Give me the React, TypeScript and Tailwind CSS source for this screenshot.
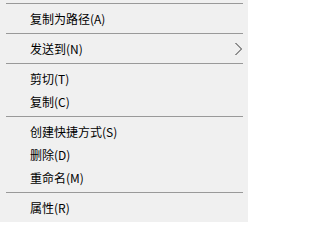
import React from 'react';

type Entry = { label: string; submenu?: boolean } | 'sep';

const entries: Entry[] = [
  'sep',
  { label: '复制为路径(A)' },
  'sep',
  { label: '发送到(N)', submenu: true },
  'sep',
  { label: '剪切(T)' },
  { label: '复制(C)' },
  'sep',
  { label: '创建快捷方式(S)' },
  { label: '删除(D)' },
  { label: '重命名(M)' },
  'sep',
  { label: '属性(R)' },
];

function ChevronRight() {
  return (
    <svg width="9" height="14" viewBox="0 0 9 14" className="text-[#333]">
      <path d="M1.5 1 L7.5 7 L1.5 13" fill="none" stroke="currentColor" strokeWidth="1" />
    </svg>
  );
}

export default function App() {
  return (
    <div
      className="w-[248px] h-[222px] bg-[#f0f0f0] pb-[3px] overflow-hidden select-none"
      style={{ fontFamily: '"Noto Sans CJK SC", "Noto Sans", sans-serif' }}
    >
      {entries.map((e, i) =>
        e === 'sep' ? (
          <div key={i} className="h-[7px] py-[3px] pl-[6px] pr-[5px]">
            <div className="h-px bg-[#999999]" />
          </div>
        ) : (
          <div
            key={i}
            className="h-[23px] flex items-center justify-between pl-[30px] pr-[5px] text-[12px] leading-none text-black"
          >
            <span>{e.label}</span>
            {e.submenu && <ChevronRight />}
          </div>
        )
      )}
    </div>
  );
}
